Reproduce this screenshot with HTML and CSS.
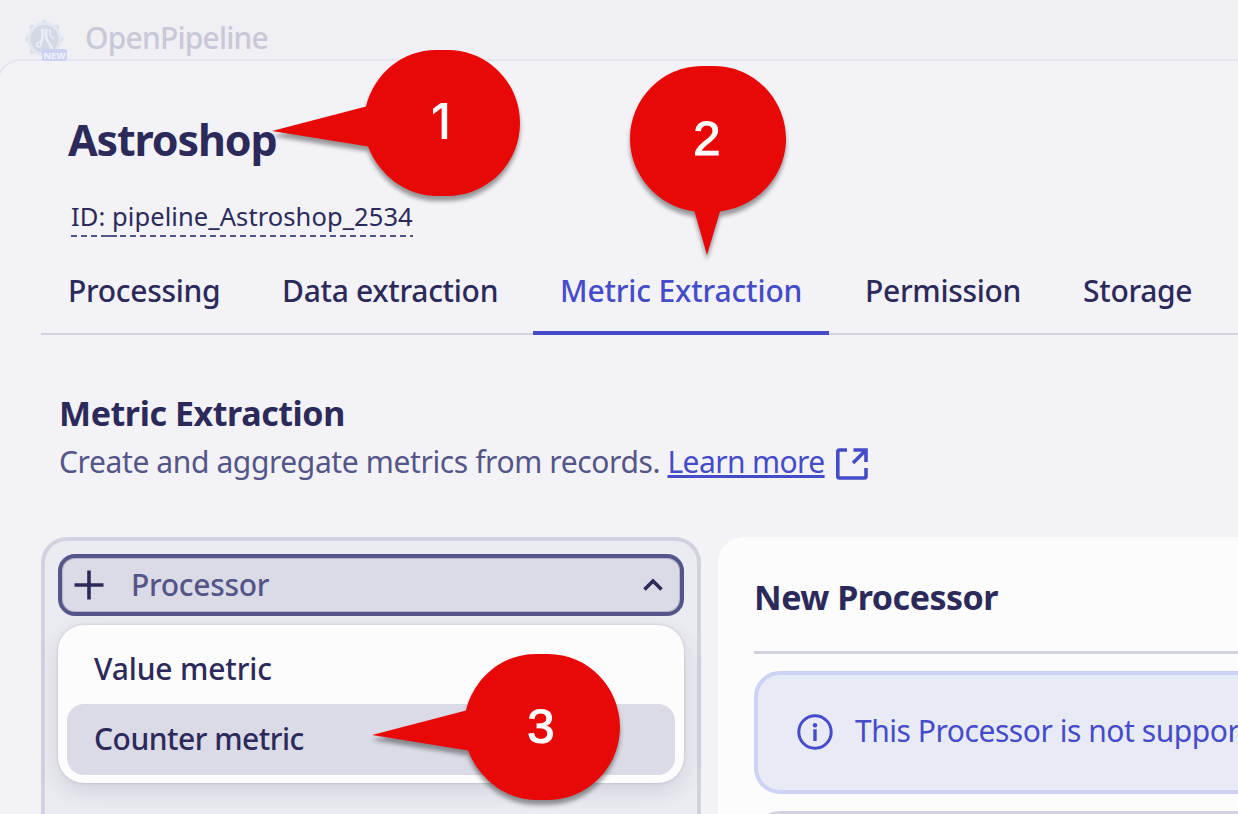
FILE: index.html
```html
<!DOCTYPE html>
<html lang="en">
<head>
<meta charset="utf-8">
<title>OpenPipeline</title>
<link rel="stylesheet" href="styles.css">
</head>
<body>
<div class="app">
  <header class="app-header">
    <svg class="app-logo" width="42" height="42" viewBox="0 0 42 42">
      <g fill="#dddfe8">
        <circle cx="19.500" cy="3" r="3"/><circle cx="7.500" cy="7.500" r="3"/><circle cx="31.500" cy="7.500" r="3"/>
        <circle cx="3.500" cy="19" r="3"/><circle cx="35.500" cy="19" r="3"/><circle cx="7.500" cy="31" r="3"/>
      </g>
      <circle cx="19.500" cy="19" r="15.500" fill="#d4d8e4" stroke="#e2e7f2" stroke-width="3"/>
      <g fill="none" stroke="#eceef6" stroke-width="2.500">
        <path d="M17.500 9v9c0 3-1 4-2.500 5.500"/><circle cx="14" cy="24.500" r="2.200" stroke-width="1.500"/>
        <path d="M21 9v7c0 5 4 7 6 13"/><path d="M25 9v5c0 2 1.500 3 4 5" stroke-width="1.500"/>
      </g>
      <rect x="17" y="29" width="25" height="12" rx="2" fill="#cdd2f3"/>
      <text class="logo-tag" x="29.500" y="38.500" text-anchor="middle">NEW</text>
    </svg>
    <span class="app-name">OpenPipeline</span>
  </header>

  <main class="sheet">
    <h1 class="title">Astroshop</h1>
    <div class="pipeline-id"><span class="id-text">ID: pipeline_Astroshop_2534</span>
      <svg class="id-line" width="342" height="2"><path d="M0 1H34"/><path class="id-joint" d="M33 1H46"/><path d="M49 1H342"/></svg>
    </div>
    <nav class="tabs">
      <a class="tab tab-processing">Processing</a>
      <a class="tab tab-data">Data extraction</a>
      <a class="tab tab-metric active">Metric Extraction</a>
      <a class="tab tab-permission">Permission</a>
      <a class="tab tab-storage">Storage</a>
    </nav>

    <section class="intro">
      <h2 class="heading">Metric Extraction</h2>
      <p class="description">Create and aggregate metrics from records. <a class="link">Learn more</a>
        <svg class="external" width="32" height="32" viewBox="0 0 32 32" fill="none" stroke="#454cc9" stroke-width="3.600">
          <path d="M11 2H3.500Q1.800 2 1.800 3.700V28.300Q1.800 30 3.500 30H28.300Q30 30 30 28.300V20"/>
          <path d="M17.500 2H30V14M29.500 2.500L17 15"/>
        </svg>
      </p>
    </section>

    <div class="columns">
      <section class="list-panel">
        <button class="select">
          <svg width="30" height="30" viewBox="0 0 30 30"><path d="M15 .500V29.500M.500 15H29.500" stroke="#2c2a5a" stroke-width="3.600"/></svg>
          <span class="select-label">Processor</span>
          <svg class="chevron" width="20" height="14" viewBox="0 0 20 14"><path d="M1.500 11.500L10 3L18.500 11.500" fill="none" stroke="#2c2a5a" stroke-width="3.600"/></svg>
        </button>
        <div class="menu">
          <div class="option option-value">Value metric</div>
          <div class="option selected">Counter metric</div>
        </div>
      </section>
      <section class="detail-panel">
        <h2 class="detail-title">New Processor</h2>
        <div class="notice">
          <svg class="info" width="36" height="36" viewBox="0 0 36 36"><circle cx="18" cy="18" r="16.200" fill="none" stroke="#454cc9" stroke-width="3"/><circle cx="18" cy="11.200" r="2.200" fill="#454cc9"/><path d="M18 15.300V27" stroke="#454cc9" stroke-width="3.400"/></svg>
          <span class="notice-text">This Processor is not suppor</span>
        </div>
        <div class="next-card"></div>
      </section>
    </div>
  </main>

  <svg class="callout callout-one" width="250" height="150" viewBox="0 0 250 150">
    <path class="bubble" d="M0 81L94 56.500C102 24 130 0 164 0H176C216 0 248 33 248 73S216 146 176 146H164C134 146 107 125 96 96.500Z"/>
    <text class="number number-one" x="169" y="88.500">1</text>
  </svg>
  <svg class="callout callout-two" width="158" height="192" viewBox="0 0 158 192">
    <path class="bubble" d="M72 0H84C124 0 156 33 156 73C156 109 128 141 90 145.500L77 189L64.500 145.500C28 141 0 109 0 73C0 33 32 0 72 0Z"/>
    <text class="number" x="77" y="88.500">2</text>
  </svg>
  <svg class="callout callout-three" width="250" height="150" viewBox="0 0 250 150">
    <path class="bubble" d="M0 81L94 56.500C102 24 130 0 164 0H176C216 0 248 33 248 73S216 146 176 146H164C134 146 107 125 96 96.500Z"/>
    <text class="number" x="169" y="88.500">3</text>
  </svg>
</div>
</body>
</html>
```
FILE: styles.css
```css
* { box-sizing: border-box; }
body { margin: 0; overflow: hidden; }
.app {
  position: relative;
  width: 1238px;
  height: 814px;
  overflow: hidden;
  background: #f0eff4;
  color: #2c2a5a;
  font-family: "Noto Sans", sans-serif;
  font-size: 30px;
  white-space: nowrap;
}
h1, h2, p { margin: 0; }
.app-header {
  display: flex;
  align-items: flex-start;
  height: 59px;
  padding: 20px 0 0 25px;
}
.app-logo { flex: none; overflow: visible; }
.logo-tag { fill: #f1f2fb; font-size: 9.5px; font-weight: 700; }
.app-name {
  margin: -2px 0 0 18px;
  line-height: 40px;
  font-weight: 500;
  letter-spacing: -.8px;
  color: #c9c8d7;
}
.sheet {
  width: 1300px;
  height: 800px;
  margin-left: -4px;
  padding-left: 4px;
  border-top: 2px solid #e6e5eb;
  border-left: 2px solid #e6e5eb;
  border-radius: 25px 0 0 0;
  background: #f3f2f7;
}
.title {
  margin: 49px 0 0 66px;
  line-height: 60px;
  font-size: 43px;
  font-weight: 700;
  letter-spacing: -1.15px;
}
.pipeline-id {
  display: flex;
  flex-direction: column;
  height: 37px;
  margin: 31px 0 0 69px;
}
.id-text { line-height: 30px; font-size: 25.5px; letter-spacing: .08px; }
.id-line {
  margin-top: 4px;
  stroke: #545588;
  stroke-width: 2;
  stroke-dasharray: 6 4;
}
.id-joint { stroke-dasharray: none; }
.tabs {
  display: flex;
  height: 97px;
  margin-left: 39px;
  border-bottom: 2px solid #d1d2e0;
}
.tab {
  height: 97px;
  padding: 33px 0 0 27px;
  line-height: 40px;
  font-weight: 500;
  letter-spacing: -.3px;
}
.tab-processing { width: 214px; }
.tab-data { width: 278px; }
.tab-metric { width: 296px; letter-spacing: -.15px; }
.tab-permission { width: 227px; padding-left: 36px; }
.active { color: #454cc9; border-bottom: 4px solid #454cc9; }
.intro { margin: 58px 0 0 57px; }
.heading {
  line-height: 40px;
  font-size: 34px;
  font-weight: 700;
  letter-spacing: -.42px;
}
.description {
  display: flex;
  height: 40px;
  margin-top: 9px;
  line-height: 40px;
  letter-spacing: -.39px;
  color: #545588;
  white-space: pre;
}
.link {
  color: #454cc9;
  letter-spacing: -.6px;
  text-decoration: underline;
  text-decoration-thickness: 3px;
  text-underline-offset: 2px;
}
.external { flex: none; margin: 6px 0 0 11px; }
.columns { display: flex; gap: 17px; margin: 55px 0 0 39px; }
.list-panel {
  width: 660px;
  height: 320px;
  padding: 13px;
  border: 4px solid #d1d2e0;
  border-radius: 26px;
  background: #ebecf1;
}
.select {
  display: flex;
  align-items: center;
  width: 626px;
  height: 62px;
  padding: 0 17px 0 12px;
  border: 4px solid #545588;
  border-radius: 17px;
  background: #dbdbe7;
  box-shadow: inset 0 0 0 1px #b4b5ce;
}
.select-label {
  flex: 1;
  margin: -2px 0 0 27px;
  text-align: left;
  font: 500 30px "Noto Sans", sans-serif;
  letter-spacing: -.3px;
  color: #545588;
}
.menu {
  width: 626px;
  height: 158px;
  margin-top: 9px;
  padding: 9px;
  border-radius: 26px;
  background: #fcfcfd;
  box-shadow: 0 0 3px rgba(44, 42, 90, .2), 0 8px 22px rgba(44, 42, 90, .14);
}
.option {
  height: 70px;
  padding: 15px 27px;
  line-height: 40px;
  font-weight: 500;
  letter-spacing: -.5px;
}
.option-value { letter-spacing: -.15px; }
.selected { height: 71px; border-radius: 17px; background: #dbdbe7; }
.detail-panel {
  width: 560px;
  height: 320px;
  padding: 0 0 0 36px;
  border-radius: 26px;
  background: #fcfcfd;
}
.detail-title {
  height: 117px;
  padding-top: 40px;
  border-bottom: 3px solid #d1d2e0;
  line-height: 40px;
  font-size: 34px;
  font-weight: 700;
  letter-spacing: -.5px;
}
.notice {
  display: flex;
  align-items: center;
  height: 123px;
  margin-top: 17px;
  padding-left: 39px;
  border: 4px solid #cdd3f4;
  border-radius: 26px;
  background: #e8eaf6;
  color: #454cc9;
}
.info { flex: none; margin-top: -1px; }
.notice-text {
  margin: -3px 0 0 22px;
  line-height: 40px;
  letter-spacing: -.46px;
}
.next-card {
  height: 60px;
  margin-top: 17px;
  border: 4px solid #d1d2e0;
  border-radius: 26px;
}
.callout { position: absolute; overflow: visible; }
.callout-one { left: 272px; top: 50px; }
.callout-two { left: 630px; top: 66px; }
.callout-three { left: 372px; top: 654px; }
.bubble { fill: #e90808; filter: drop-shadow(0 5px 2px rgba(0, 0, 0, .38)); }
.number {
  fill: #fff;
  stroke: #fff;
  stroke-width: 1.2px;
  font: 400 49px "Liberation Sans", sans-serif;
  text-anchor: middle;
}
.number-one { stroke: none; font: 500 49px Inter, sans-serif; }
```
